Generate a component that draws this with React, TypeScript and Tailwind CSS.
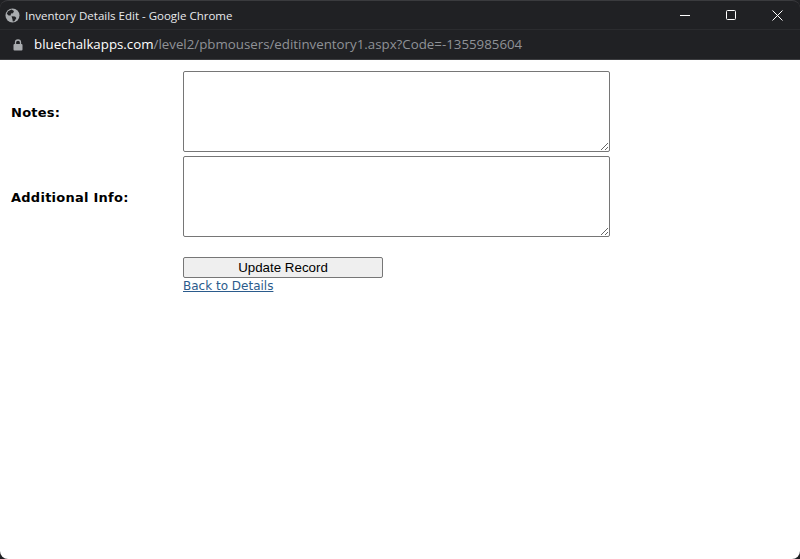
const labelClass =
  "font-['DejaVu_Sans'] font-bold text-[13px] tracking-[0.25px] leading-[18px] pt-[3px] text-black";
const areaClass =
  "block w-[427px] h-[81px] bg-white border border-[#767676] rounded-[2px] outline-none resize";

function TitleBar() {
  return (
    <div className="bg-[#202124] border-t border-[#3a3b3e] rounded-t-[8px]">
      <div className="h-[29px] flex items-center justify-between border-b border-[#2b2c2f]">
        <div className="flex items-center pt-[1px]">
          <svg width="15" height="15" viewBox="0 0 15 15" className="ml-[5px]">
            <circle cx="7.5" cy="7.5" r="7" fill="#a9acaf" />
            <path d="M3 3.2L6.5 1.6 9 3 8 5.2 6 5.6 5.6 7.6 3.6 7.4 1.8 5.8z" fill="#202124" />
            <path d="M6.5 8.2L10 8.4 11.4 10 9.4 13.2 7.8 13.4 7.4 11z" fill="#202124" />
          </svg>
          <span className="ml-[5px] font-['Open_Sans'] text-[11.5px] text-[#e8eaed]">
            Inventory Details Edit - Google Chrome
          </span>
        </div>
        <div className="flex items-center text-white">
          <button className="w-[46px] h-[29px] flex items-center justify-center">
            <svg width="10" height="10" viewBox="0 0 10 10">
              <path d="M0 5.5h10" stroke="currentColor" strokeWidth="1" />
            </svg>
          </button>
          <button className="w-[46px] h-[29px] flex items-center justify-center">
            <svg width="10" height="10" viewBox="0 0 10 10">
              <rect x="0.5" y="0.5" width="9" height="9" rx="1" fill="none" stroke="currentColor" strokeWidth="1" />
            </svg>
          </button>
          <button className="w-[46px] h-[29px] flex items-center justify-center">
            <svg width="11" height="11" viewBox="0 0 11 11">
              <path d="M0.5 0.5l10 10M10.5 0.5l-10 10" stroke="currentColor" strokeWidth="1" />
            </svg>
          </button>
        </div>
      </div>
      <div className="h-[30px] flex items-center border-b border-[#3c3d40]">
        <svg width="10" height="12" viewBox="0 0 10 12" className="ml-[13px]">
          <path d="M2.5 5V3.5a2.5 2.5 0 0 1 5 0V5" fill="none" stroke="#a9acaf" strokeWidth="1.3" />
          <rect x="0.5" y="5" width="9" height="6.5" rx="1" fill="#a9acaf" />
        </svg>
        <div className="ml-[11px] pt-[1px] font-['Open_Sans'] text-[13.3px]">
          <span className="text-white">bluechalkapps.com</span>
          <span className="text-[#8f9297]">/level2/pbmousers/editinventory1.aspx?Code=-1355985604</span>
        </div>
      </div>
    </div>
  );
}

function App() {
  return (
    <div className="w-[800px] h-[559px] overflow-hidden bg-[#202124]">
      <TitleBar />
      <div className="h-[499px] bg-white rounded-b-[8px] pt-[11px] pl-[11px]">
        <div className="grid grid-cols-[172px_auto] justify-start gap-y-[4px] items-center">
          <label className={labelClass}>Notes:</label>
          <textarea className={areaClass} />
          <label className={labelClass}>Additional Info:</label>
          <textarea className={areaClass} />
        </div>
        <div className="ml-[172px] mt-[20px] flex flex-col items-start">
          <button className="w-[200px] h-[21px] bg-[#efefef] border border-[#767676] rounded-[2px] font-['Liberation_Sans'] text-[13.33px] text-black">
            Update Record
          </button>
          <a
            href="#"
            className="pt-[1px] font-['DejaVu_Sans'] text-[12px] leading-[15px] text-[#2b5b8c] underline"
          >
            Back to Details
          </a>
        </div>
      </div>
    </div>
  );
}

export default App;
